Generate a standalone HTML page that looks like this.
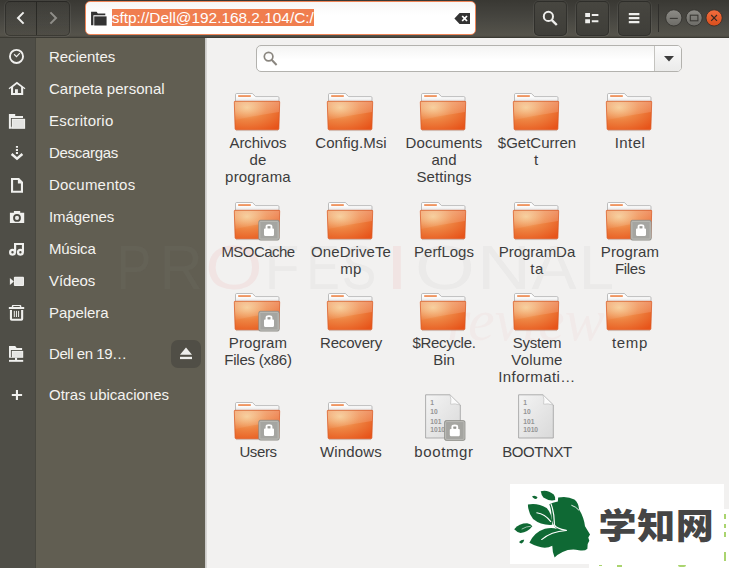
<!DOCTYPE html>
<html><head><meta charset="utf-8">
<style>
*{box-sizing:border-box;margin:0;padding:0}
html,body{width:729px;height:569px;overflow:hidden;background:#fff}
body{font-family:"Liberation Sans",sans-serif;font-size:15px;color:#3c3c3c;position:relative}
#win{position:absolute;left:0;top:0;width:729px;height:568px;background:#f2f1f0;overflow:hidden}
#hdr{position:absolute;left:0;top:0;width:729px;height:38px;background:linear-gradient(#393833,#403f3a 25%,#4a4943 60%,#55534b 95%,#4a4841);border-bottom:1px solid #3b3a33}
.hb{position:absolute;top:1px;height:35px;border:1px solid rgba(25,25,22,.42);border-radius:5px;background:linear-gradient(#474640,#3f3e39);box-shadow:0 0 0 1px rgba(255,255,255,.06)}
.hb.nav{background:linear-gradient(rgba(255,255,255,.02),rgba(0,0,0,.07))}
#entry{position:absolute;left:85px;top:1px;width:391px;height:34px;border:1.3px solid #ef8558;border-radius:5px;background:linear-gradient(#f7f7f6,#fff 40%)}
#entry .sel{position:absolute;left:25.7px;top:6.8px;height:17px;background:#f07e4f;color:#fff;font-size:15.4px;line-height:17px;white-space:nowrap}
#side1{position:absolute;left:0;top:38px;width:36px;height:530px;background:#4f4e47}
#side1b{position:absolute;left:35px;top:38px;width:1px;height:530px;background:#48473f}
#side2{position:absolute;left:36px;top:38px;width:169px;height:530px;background:#615e52}
#sidesep{position:absolute;left:205px;top:38px;width:2px;height:530px;background:linear-gradient(90deg,#c4c3c1,#dddcda)}
.sl{position:absolute;left:49px;color:#f4f3f0;font-size:15px;line-height:20px;white-space:nowrap}
.si{position:absolute;left:4px;width:24px;height:24px}
#search{position:absolute;left:256px;top:45px;width:426px;height:27px;border:1px solid #b3b2ae;border-radius:5px;background:linear-gradient(#f4f4f3,#fff 55%)}
#dd{position:absolute;left:654px;top:46px;width:27px;height:25px;border-left:1px solid #c4c3bf;border-radius:0 4px 4px 0;background:linear-gradient(#fafafa,#ebebea)}
.it{position:absolute;width:100px;text-align:center;font-size:15px;line-height:16.75px;color:#3c3c3c}
.it svg{display:block;margin:0 auto}
.it .t{margin-top:-0.7px}
#wm{position:absolute;left:0;top:232px;width:729px;height:70px;z-index:5;pointer-events:none;font-family:"Liberation Sans",sans-serif;font-size:63px;line-height:70px;color:rgba(150,150,150,.075)}
#wm span{position:absolute;top:0;width:60px;text-align:center}
#wm i{font-style:normal;color:rgba(235,120,120,.10)}
#wm2{position:absolute;left:447px;top:290px;font-size:60px;line-height:60px;letter-spacing:0;color:rgba(235,120,120,.05);font-style:italic;font-family:"Liberation Serif",serif;z-index:0;white-space:nowrap}
#logo1{position:absolute;left:589px;top:509px;width:140px;height:60px;background:#fff}
#logo2{position:absolute;left:510px;top:484px;width:214px;height:79.5px;background:#fff}
#cn{position:absolute;left:598.6px;top:500px;font-family:"Liberation Sans","Noto Sans CJK SC",sans-serif;font-weight:900;font-size:38px;line-height:54px;color:#454545;white-space:nowrap;letter-spacing:.6px;transform:scaleY(.94);transform-origin:0 50%}
.gb{position:absolute;background:#8dc63f;opacity:.75}
</style></head><body>

<svg width="0" height="0" style="position:absolute">
<defs>
<linearGradient id="gb" x1="0" y1="0" x2="0" y2="1"><stop offset="0" stop-color="#ffffff"/><stop offset="0.5" stop-color="#fafafa"/><stop offset="1" stop-color="#dedede"/></linearGradient>
<radialGradient id="gf" cx="0.28" cy="0.22" r="0.95"><stop offset="0" stop-color="#f5c486"/><stop offset="0.45" stop-color="#ee8543"/><stop offset="1" stop-color="#e7541a"/></radialGradient>
<linearGradient id="gs" x1="0" y1="0" x2="0" y2="1"><stop offset="0" stop-color="#fff" stop-opacity=".28"/><stop offset="1" stop-color="#fff" stop-opacity=".05"/></linearGradient>
<linearGradient id="gp" x1="0" y1="0" x2="1" y2="1"><stop offset="0" stop-color="#f4f4f4"/><stop offset="1" stop-color="#d9d9d9"/></linearGradient>
<g id="folder">
 <path d="M7.5,14 V6.7 Q7.5,5.5 8.7,5.5 H24.3 L27.6,8.6 H49.8 Q51,8.6 51,9.8 V14 Z" fill="url(#gb)" stroke="#adadad" stroke-width="0.8"/>
 <rect x="10.2" y="7.2" width="12.6" height="1.7" fill="#ee8a50"/>
 <path d="M7,13.3 H51 Q51.8,13.3 51.7,14.1 L50.9,40.8 Q50.8,41.8 49.8,41.8 H8.2 Q7.2,41.8 7.1,40.8 L6.3,14.1 Q6.2,13.3 7,13.3 Z" fill="url(#gf)" stroke="#d9541e" stroke-width="0.7"/>
 <path d="M6.8,13.8 H51.3 L51,24 Q30,27 7.3,32 Z" fill="url(#gs)"/>
 <rect x="8" y="42.2" width="42" height="0.9" fill="#000" opacity=".12"/>
</g>
<g id="lock">
 <rect x="30.8" y="23.3" width="20.4" height="19.8" rx="1.6" fill="#a5a5a1" stroke="#8b8b87" stroke-width="0.8"/>
 <rect x="31.8" y="24.3" width="18.4" height="17.8" rx="1" fill="none" stroke="#bdbdb9" stroke-width="0.9"/>
 <path d="M36,32.5 Q36,31.6 37,31.6 H37.6 V29.6 Q37.6,27.3 41,27.3 Q44.4,27.3 44.4,29.6 V31.6 H45 Q46,31.6 46,32.5 V37.8 Q46,38.9 45,38.9 H37 Q36,38.9 36,37.8 Z M39.6,29.4 V31.6 H42.4 V29.4 Z" fill="#fff" fill-rule="evenodd"/>
 <rect x="39.6" y="29.4" width="2.8" height="1" fill="#8c8c88"/>
</g>
<g id="bin">
 <path d="M11.6,-2.2 H35.9 L46.3,8 V41 H11.6 Z" fill="url(#gp)" stroke="#a6a6a6" stroke-width="0.9"/>
 <path d="M35.9,-2.2 L46.3,8 Q41,6.2 36.6,7.2 Q37.6,2 35.9,-2.2 Z" fill="#fbfbfb" stroke="#b8b8b8" stroke-width="0.6"/>
 <g font-family="'Liberation Sans',sans-serif" font-size="6.7" font-weight="bold" fill="#959595">
  <text x="16.2" y="7.8">1</text><text x="16.2" y="17.4">10</text><text x="16.2" y="26.5">101</text><text x="16.2" y="35.4">1010</text>
 </g>
</g>
</defs></svg>

<div id="win">
<div id="wm"><span style="left:104.3px;transform:scaleX(0.83)">P</span><span style="left:151.0px;transform:scaleX(0.95)">R</span><span style="left:203.5px;transform:scaleX(1.17)"><i>O</i></span><span style="left:251.5px;transform:scaleX(0.90)">F</span><span style="left:292.5px;transform:scaleX(0.79)">E</span><span style="left:329.0px;transform:scaleX(0.82)">S</span><span style="left:367.0px;transform:scaleX(1.33)"><i>I</i></span><span style="left:414.5px;transform:scaleX(1.22)">O</span><span style="left:473.5px;transform:scaleX(1.19)">N</span><span style="left:523.5px;transform:scaleX(1.07)">A</span><span style="left:566.5px;transform:scaleX(1.00)">L</span></div><div id="wm2">review</div>
<div id="hdr">
 <div class="hb nav" style="left:5px;width:65px"></div>
 <div style="position:absolute;left:36px;top:2px;width:1px;height:33px;background:rgba(25,25,22,.6)"></div>
 <svg style="position:absolute;left:14px;top:10px" width="14" height="16" viewBox="0 0 14 16"><path d="M9.6,2.4 L4,8 L9.6,13.6" fill="none" stroke="#eeeeec" stroke-width="2"/></svg>
 <svg style="position:absolute;left:46px;top:10px" width="14" height="16" viewBox="0 0 14 16"><path d="M4.4,2.4 L10,8 L4.4,13.6" fill="none" stroke="#8f8e89" stroke-width="2"/></svg>
 <div id="entry"><svg style="position:absolute;left:3.6px;top:7.6px" width="17" height="17" viewBox="0 0 16 16"><path d="M1,1.6 H6.2 L7.4,3.4 H14.4 V5 H3.2 V14.4 H1 Z" fill="#333"/><rect x="4" y="6" width="11.6" height="8.6" fill="#333"/></svg><span class="sel">sftp://Dell@192.168.2.104/C:/</span>
 <svg style="position:absolute;left:367.5px;top:9.7px" width="17" height="13" viewBox="0 0 17 13"><path d="M5.6,1 H16 V12 H5.6 L0.4,6.5 Z" fill="#333"/><path d="M8.2,4 L13,9 M13,4 L8.2,9" stroke="#fff" stroke-width="1.8"/></svg>
 </div>
 <div class="hb" style="left:533.5px;width:33px"></div>
 <svg style="position:absolute;left:540px;top:8px" width="20" height="20" viewBox="0 0 20 20"><circle cx="8.4" cy="8.4" r="4.6" fill="none" stroke="#eeeeec" stroke-width="2"/><path d="M11.6,11.8 L16.8,17" stroke="#eeeeec" stroke-width="2.4"/></svg>
 <div class="hb" style="left:576px;width:33px"></div>
 <svg style="position:absolute;left:584px;top:10px" width="16" height="16" viewBox="0 0 16 16"><path d="M1.2,3 h4.8 v4 h-4.8z M1.2,9.2 h4.8 v4 h-4.8z M7.8,4 h6.6 v2 h-6.6z M7.8,10.2 h6.6 v2 h-6.6z" fill="#eeeeec"/></svg>
 <div class="hb" style="left:618px;width:33px"></div>
 <svg style="position:absolute;left:626px;top:10px" width="16" height="16" viewBox="0 0 16 16"><path d="M2.8,3 h10.6 v2.2 h-10.6z M2.8,7 h10.6 v2.2 h-10.6z M2.8,11 h10.6 v2.2 h-10.6z" fill="#eeeeec"/></svg>
 <div style="position:absolute;left:658px;top:4px;width:1px;height:28px;background:#2f2e2b"></div>
 <svg style="position:absolute;left:664px;top:8px" width="62" height="20" viewBox="0 0 62 20">
  <defs><linearGradient id="wg" x1="0" y1="0" x2="0" y2="1"><stop offset="0" stop-color="#8d8c87"/><stop offset="1" stop-color="#6c6b66"/></linearGradient><linearGradient id="wc" x1="0" y1="0" x2="0" y2="1"><stop offset="0" stop-color="#f26d3e"/><stop offset="1" stop-color="#d94e1c"/></linearGradient></defs>
  <circle cx="9.8" cy="9.9" r="8.1" fill="url(#wg)" stroke="#2e2d2a" stroke-width="0.8"/><path d="M5.8,10.4 H13.8" stroke="#3a3935" stroke-width="1.1"/>
  <circle cx="30.1" cy="9.9" r="8.1" fill="url(#wg)" stroke="#2e2d2a" stroke-width="0.8"/><rect x="26.3" y="7.2" width="7.6" height="5.6" fill="none" stroke="#3a3935" stroke-width="1.1"/>
  <circle cx="50.1" cy="9.9" r="8.1" fill="url(#wc)" stroke="#2e2d2a" stroke-width="0.8"/><path d="M47.2,7 L53,12.8 M53,7 L47.2,12.8" stroke="#3a2a22" stroke-width="1.2"/>
 </svg>
</div>
<div id="side1"></div><div id="side1b"></div><div id="side2"></div><div id="sidesep"></div>
<svg class="si" style="top:45px" viewBox="0 0 24 24"><circle cx="12.5" cy="11.4" r="6.55" fill="none" stroke="#f0f0ee" stroke-width="1.9"/><path d="M10.1,9.3 L12.5,11.6 L15.8,8.2" fill="none" stroke="#f0f0ee" stroke-width="1.2"/></svg><div class="sl" style="top:47px;letter-spacing:-0.06px">Recientes</div>
<svg class="si" style="top:77px" viewBox="0 0 24 24"><path d="M12.9,4.7 L4.6,11.2 L5.4,12.3 L7,11.1 V17.9 H19.2 V11.1 L20.6,12.3 L21.4,11.2 Z M9.1,10 L12.9,7.1 L17.1,10 V15.9 H13.9 V12.2 H11 V15.9 H9.1 Z" fill="#f0f0ee" fill-rule="evenodd"/></svg><div class="sl" style="top:79px;letter-spacing:0.04px">Carpeta personal</div>
<svg class="si" style="top:109px" viewBox="0 0 24 24"><path d="M4.9,5 H11.2 V7 H19 V9.1 H6.9 V17.7 H7.8 V19.8 H4.9 Z" fill="#f0f0ee"/><rect x="7.8" y="9.8" width="13.3" height="10" fill="#f0f0ee"/><rect x="8.8" y="10.8" width="11.3" height="8" fill="#e4e4e2"/></svg><div class="sl" style="top:111px;letter-spacing:0.19px">Escritorio</div>
<svg class="si" style="top:141px" viewBox="0 0 24 24"><path d="M11.9,5 h2.1 v1.8 h-2.1z M11.9,8 h2.1 v1.9 h-2.1z M11.9,11 h2.1 v1.9 h-2.1z" fill="#f0f0ee"/><path d="M7.6,13 L13,17.6 L18.4,13" fill="none" stroke="#f0f0ee" stroke-width="2.5" stroke-linejoin="miter"/></svg><div class="sl" style="top:143px;letter-spacing:-0.3px">Descargas</div>
<svg class="si" style="top:173px" viewBox="0 0 24 24"><path d="M8.05,6.05 H14.6 L17.95,9.5 V18.75 H8.05 Z" fill="none" stroke="#f0f0ee" stroke-width="2.1"/><path d="M13.9,6 H14.6 L18,9.5 V10.4 H13.9 Z" fill="#f0f0ee"/></svg><div class="sl" style="top:175px;letter-spacing:0.22px">Documentos</div>
<svg class="si" style="top:205px" viewBox="0 0 24 24"><path d="M9.9,5.9 H16.2 V7.8 H20.2 V18.1 H5.9 V7.8 H9.9 Z" fill="#f0f0ee"/><circle cx="13" cy="12.9" r="3.9" fill="#4a4942"/><circle cx="13" cy="12.9" r="2.05" fill="#e9e9e7"/></svg><div class="sl" style="top:207px;letter-spacing:-0.09px">Imágenes</div>
<svg class="si" style="top:237px" viewBox="0 0 24 24"><path d="M10,6.1 H20 V15.6 H17.9 V8 H12.2 V15.6 H10 Z" fill="#f0f0ee"/><circle cx="8.5" cy="15.3" r="2.35" fill="none" stroke="#f0f0ee" stroke-width="2.3"/><circle cx="16.4" cy="15.3" r="2.35" fill="none" stroke="#f0f0ee" stroke-width="2.3"/></svg><div class="sl" style="top:239px;letter-spacing:-0.14px">Música</div>
<svg class="si" style="top:269px" viewBox="0 0 24 24"><rect x="9.9" y="7.8" width="10.1" height="9.1" rx="0.9" fill="#f0f0ee"/><rect x="10.9" y="8.8" width="8.1" height="7.1" fill="#e6e6e4"/><path d="M5.9,8.9 L9.9,12.4 L5.9,16 Z" fill="#f0f0ee"/></svg><div class="sl" style="top:271px;letter-spacing:-0.07px">Vídeos</div>
<svg class="si" style="top:301px" viewBox="0 0 24 24"><path d="M4.85,6.1 H7.8 V5 Q7.8,4 8.8,4 H16.3 Q17.3,4 17.3,5 V6.1 H20.2 V8 H4.85 Z M9.3,5.1 V6 H15.8 V5.1 Z" fill="#f0f0ee" fill-rule="evenodd"/><path d="M6.95,8.9 V18 Q6.95,18.75 7.7,18.75 H17.4 Q18.15,18.75 18.15,18 V8.9" fill="none" stroke="#f0f0ee" stroke-width="2.1"/><path d="M10.3,9.9 V16 M12.45,9.9 V16 M14.6,9.9 V16" stroke="#f0f0ee" stroke-width="1"/></svg><div class="sl" style="top:303px;letter-spacing:-0.06px">Papelera</div>
<svg class="si" style="top:342px" viewBox="0 0 24 24"><path d="M5,4 H11.2 L12.7,5.9 H18.1 V7.9 H6.9 V15 H7.8 V15.8 H5 Z" fill="#f0f0ee"/><rect x="7.8" y="8.9" width="11.4" height="6.9" fill="#f0f0ee"/><rect x="8.8" y="9.9" width="9.4" height="4.9" fill="#e4e4e2"/><rect x="11" y="15.8" width="2.1" height="2.2" fill="#f0f0ee"/><rect x="5" y="17.9" width="14.2" height="1.9" fill="#f0f0ee"/></svg><div class="sl" style="top:344px;letter-spacing:-0.45px">Dell en 19…</div>
<svg class="si" style="top:383px" viewBox="0 0 24 24"><path d="M11.9,7 H14 V11 H18.1 V13 H14 V17.1 H11.9 V13 H7.8 V11 H11.9 Z" fill="#f0f0ee"/></svg><div class="sl" style="top:385px;letter-spacing:-0.0px">Otras ubicaciones</div>

<div style="position:absolute;left:171px;top:340px;width:30px;height:28px;border-radius:7px;background:#504e46"></div>
<svg style="position:absolute;left:178px;top:346px" width="16" height="16" viewBox="0 0 16 16"><path d="M8,1.6 L14,8.8 H2 Z" fill="#eeeeec"/><rect x="2" y="10.8" width="12" height="2.3" fill="#eeeeec"/></svg>
<div id="search"><svg style="position:absolute;left:5px;top:4px" width="18" height="18" viewBox="0 0 18 18"><circle cx="6.6" cy="6.6" r="4.3" fill="none" stroke="#8a867f" stroke-width="1.7"/><path d="M9.6,9.8 L14.6,15" stroke="#8a867f" stroke-width="2"/></svg></div>
<div id="dd"><svg style="position:absolute;left:9px;top:10px" width="10" height="6" viewBox="0 0 10 6"><path d="M0,0 H10 L5,5.4 Z" fill="#3c3c3c"/></svg></div>
<div class="it" style="left:208px;top:88px"><svg width="60" height="48" viewBox="0 0 60 48"><use href="#folder"/></svg><div class="t"><span style="letter-spacing:-0.05px">Archivos</span><br><span style="letter-spacing:0.18px">de</span><br><span style="letter-spacing:0.2px">programa</span></div></div>
<div class="it" style="left:301px;top:88px"><svg width="60" height="48" viewBox="0 0 60 48"><use href="#folder"/></svg><div class="t"><span style="letter-spacing:0.04px">Config.Msi</span></div></div>
<div class="it" style="left:394px;top:88px"><svg width="60" height="48" viewBox="0 0 60 48"><use href="#folder"/></svg><div class="t"><span style="letter-spacing:0.13px">Documents</span><br><span style="letter-spacing:-0.0px">and</span><br><span style="letter-spacing:0.13px">Settings</span></div></div>
<div class="it" style="left:487px;top:88px"><svg width="60" height="48" viewBox="0 0 60 48"><use href="#folder"/></svg><div class="t"><span style="letter-spacing:-0.0px">$GetCurren</span><br><span style="letter-spacing:1.72px">t</span></div></div>
<div class="it" style="left:580px;top:88px"><svg width="60" height="48" viewBox="0 0 60 48"><use href="#folder"/></svg><div class="t"><span style="letter-spacing:0.42px">Intel</span></div></div>
<div class="it" style="left:208px;top:197px"><svg width="60" height="48" viewBox="0 0 60 48"><use href="#folder"/><use href="#lock"/></svg><div class="t"><span style="letter-spacing:-0.54px">MSOCache</span></div></div>
<div class="it" style="left:301px;top:197px"><svg width="60" height="48" viewBox="0 0 60 48"><use href="#folder"/></svg><div class="t"><span style="letter-spacing:0.06px">OneDriveTe</span><br><span style="letter-spacing:0.42px">mp</span></div></div>
<div class="it" style="left:394px;top:197px"><svg width="60" height="48" viewBox="0 0 60 48"><use href="#folder"/></svg><div class="t"><span style="letter-spacing:-0.03px">PerfLogs</span></div></div>
<div class="it" style="left:487px;top:197px"><svg width="60" height="48" viewBox="0 0 60 48"><use href="#folder"/></svg><div class="t"><span style="letter-spacing:-0.02px">ProgramDa</span><br><span style="letter-spacing:0.52px">ta</span></div></div>
<div class="it" style="left:580px;top:197px"><svg width="60" height="48" viewBox="0 0 60 48"><use href="#folder"/><use href="#lock"/></svg><div class="t"><span style="letter-spacing:0.11px">Program</span><br><span style="letter-spacing:-0.29px">Files</span></div></div>
<div class="it" style="left:208px;top:288px"><svg width="60" height="48" viewBox="0 0 60 48"><use href="#folder"/><use href="#lock"/></svg><div class="t"><span style="letter-spacing:0.11px">Program</span><br><span style="letter-spacing:-0.23px">Files (x86)</span></div></div>
<div class="it" style="left:301px;top:288px"><svg width="60" height="48" viewBox="0 0 60 48"><use href="#folder"/></svg><div class="t"><span style="letter-spacing:-0.17px">Recovery</span></div></div>
<div class="it" style="left:394px;top:288px"><svg width="60" height="48" viewBox="0 0 60 48"><use href="#folder"/></svg><div class="t"><span style="letter-spacing:-0.3px">$Recycle.</span><br><span style="letter-spacing:0.02px">Bin</span></div></div>
<div class="it" style="left:487px;top:288px"><svg width="60" height="48" viewBox="0 0 60 48"><use href="#folder"/></svg><div class="t"><span style="letter-spacing:-0.26px">System</span><br><span style="letter-spacing:0.23px">Volume</span><br><span style="letter-spacing:0.42px">Informati…</span></div></div>
<div class="it" style="left:580px;top:288px"><svg width="60" height="48" viewBox="0 0 60 48"><use href="#folder"/></svg><div class="t"><span style="letter-spacing:0.61px">temp</span></div></div>
<div class="it" style="left:208px;top:397px"><svg width="60" height="48" viewBox="0 0 60 48"><use href="#folder"/><use href="#lock"/></svg><div class="t"><span style="letter-spacing:-0.4px">Users</span></div></div>
<div class="it" style="left:301px;top:397px"><svg width="60" height="48" viewBox="0 0 60 48"><use href="#folder"/></svg><div class="t"><span style="letter-spacing:0.17px">Windows</span></div></div>
<div class="it" style="left:394px;top:397px"><svg width="60" height="48" viewBox="0 0 60 48" style="overflow:visible"><use href="#bin"/><use href="#lock" transform="translate(-0.2,0.3)"/></svg><div class="t"><span style="letter-spacing:0.62px">bootmgr</span></div></div>
<div class="it" style="left:487px;top:397px"><svg width="60" height="48" viewBox="0 0 60 48" style="overflow:visible"><use href="#bin"/></svg><div class="t"><span style="letter-spacing:-0.45px">BOOTNXT</span></div></div>

<div id="logo1"></div><div id="logo2"></div>
<svg style="position:absolute;left:508px;top:482px" width="90" height="84" viewBox="0 0 610 569">
<g fill="#0f6934">
<path d="M340,105 Q400,92 450,118 Q478,140 482,186 Q515,240 522,300 L556,356 L544,376 L551,398 L540,420 L538,452 Q520,470 480,462 Q420,450 370,475 Q335,492 316,512 Q300,470 300,432 Q240,465 145,412 Q175,340 250,316 Q300,305 332,318 Q300,290 295,240 Q296,190 280,150 Q300,140 338,132 Z"/>
<path d="M135,153 Q200,140 262,176 Q300,215 300,290 Q225,295 170,250 Q135,205 135,153 Z"/>
<path d="M222,62 Q270,50 310,85 Q325,105 320,122 Q280,132 240,105 Q225,85 222,62 Z"/>
<path d="M163,96 Q185,86 200,104 Q198,118 180,114 Q168,108 163,96 Z"/>
<path d="M42,320 Q75,280 130,280 Q155,285 165,300 Q135,340 85,346 Q60,340 42,320 Z"/>
<path d="M75,406 Q92,388 110,392 Q108,410 92,416 Q80,414 75,406 Z"/>
</g>
<g fill="none" stroke="#fff" stroke-width="7" stroke-linecap="round">
<path d="M195,208 Q250,215 290,268"/>
<path d="M228,390 Q290,335 395,328"/>
<path d="M95,318 Q125,300 152,300" stroke-width="4"/>
<path d="M432,158 Q462,168 480,190" stroke-width="6"/>
<path d="M292,150 Q316,215 314,290 Q326,316 395,328" stroke-width="8"/>
</g>
</svg>
<div id="cn">学知网</div>
<div class="gb" style="left:724px;top:514px;width:2px;height:5px"></div><div class="gb" style="left:724px;top:524px;width:2px;height:4px"></div><div class="gb" style="left:724px;top:532px;width:2px;height:5px"></div><div class="gb" style="left:724px;top:552px;width:2px;height:9px"></div>
<div class="gb" style="left:599px;top:565px;width:3px;height:1px"></div><div class="gb" style="left:617px;top:565px;width:5px;height:1.5px"></div><div class="gb" style="left:678px;top:565px;width:8px;height:2px;border-radius:0 0 4px 4px"></div>
</div>
</body></html>
